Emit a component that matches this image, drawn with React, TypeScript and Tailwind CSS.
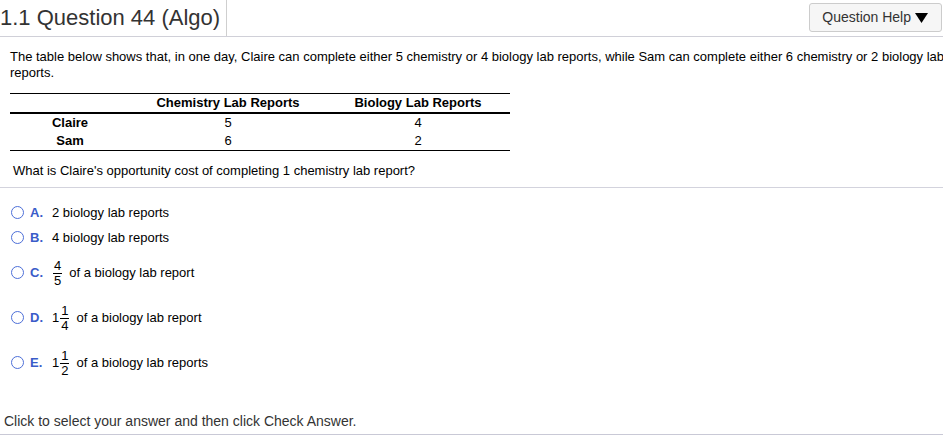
import React from 'react';

const font = { fontFamily: '"Liberation Sans", Arial, sans-serif' };

const Frac: React.FC<{ n: string; d: string }> = ({ n, d }) => (
  <span className="inline-flex flex-col items-center align-middle mx-[1px] text-[13px] leading-[14px]">
    <span className="px-[1px]">{n}</span>
    <span className="border-t border-black w-[9px] text-center leading-[13px]">{d}</span>
  </span>
);

const Radio: React.FC = () => (
  <span className="inline-block w-[13px] h-[13px] rounded-full border-[1.5px] border-[#4d6fd8] bg-white shrink-0" />
);

interface OptionProps {
  letter: string;
  tall?: boolean;
  children: React.ReactNode;
}

const Option: React.FC<OptionProps> = ({ letter, tall, children }) => (
  <div className={`flex items-center pl-[11px] ${tall ? 'h-[45px]' : 'h-[25px]'}`}>
    <Radio />
    <span className="ml-[6px] w-[22px] text-[13px] font-semibold text-[#3a5cc9]">{letter}</span>
    <span className="text-[13px] text-black flex items-center">{children}</span>
  </div>
);

export default function App() {
  const rows = [
    { name: 'Claire', chem: '5', bio: '4' },
    { name: 'Sam', chem: '6', bio: '2' },
  ];

  return (
    <div className="w-[943px] h-[436px] bg-white overflow-hidden relative" style={font}>
      {/* Header */}
      <div className="flex items-stretch h-[37px] border-b border-[#d0d0d8]">
        <div className="pr-[6px] border-r border-[#cfcfcf] flex items-center h-[36px]">
          <span className="text-[22px] text-[#333] leading-none pb-[1px]">1.1 Question 44 (Algo)</span>
        </div>
        <div className="flex-1" />
        <div className="flex items-start pt-[3px] pr-[1px]">
          <button className="h-[29px] pl-[12px] pr-[13px] bg-[#f6f6f6] border border-[#cccccc] rounded-[3px] text-[14px] text-[#333] flex items-center gap-[4px]">
            Question Help
            <svg width="13" height="10" viewBox="0 0 13 10">
              <path d="M0 0 L13 0 L6.5 10 Z" fill="#000" />
            </svg>
          </button>
        </div>
      </div>

      {/* Prompt */}
      <div className="pl-[10px] pt-[12px] text-[13px] leading-[16px] text-black">
        <div className="whitespace-nowrap">
          The table below shows that, in one day, Claire can complete either 5 chemistry or 4 biology lab reports, while Sam can complete either 6 chemistry or 2 biology lab
        </div>
        <div>reports.</div>
      </div>

      {/* Table */}
      <table className="ml-[10px] mt-[12px] border-collapse text-[13px] leading-[18px] text-black">
        <thead>
          <tr className="border-t border-black border-b-2">
            <th className="w-[120px] h-[18px] p-0" />
            <th className="w-[196px] font-bold text-center p-0">Chemistry Lab Reports</th>
            <th className="w-[184px] font-bold text-center p-0">Biology Lab Reports</th>
          </tr>
        </thead>
        <tbody>
          {rows.map((r, i) => (
            <tr key={r.name} className={i === rows.length - 1 ? 'border-b border-black' : ''}>
              <td className="text-center font-bold h-[18px] p-0">{r.name}</td>
              <td className="text-center p-0">{r.chem}</td>
              <td className="text-center p-0">{r.bio}</td>
            </tr>
          ))}
        </tbody>
      </table>

      <div className="pl-[13px] pt-[12px] text-[13px] text-black leading-[16px]">
        What is Claire's opportunity cost of completing 1 chemistry lab report?
      </div>

      <div className="mt-[8px] border-t border-[#d3d3dd]" />

      {/* Options */}
      <div className="pt-[12px]">
        <Option letter="A.">2 biology lab reports</Option>
        <Option letter="B.">4 biology lab reports</Option>
        <Option letter="C." tall>
          <Frac n="4" d="5" />
          <span className="ml-[6px]">of a biology lab report</span>
        </Option>
        <Option letter="D." tall>
          <span>1</span>
          <Frac n="1" d="4" />
          <span className="ml-[6px]">of a biology lab report</span>
        </Option>
        <Option letter="E." tall>
          <span>1</span>
          <Frac n="1" d="2" />
          <span className="ml-[6px]">of a biology lab reports</span>
        </Option>
      </div>

      {/* Footer */}
      <div className="absolute left-0 right-0 top-[411px] h-[24px] border-b border-[#c9c9d6] pl-[4px] text-[14px] text-[#333] leading-[20px]">
        Click to select your answer and then click Check Answer.
      </div>
    </div>
  );
}
